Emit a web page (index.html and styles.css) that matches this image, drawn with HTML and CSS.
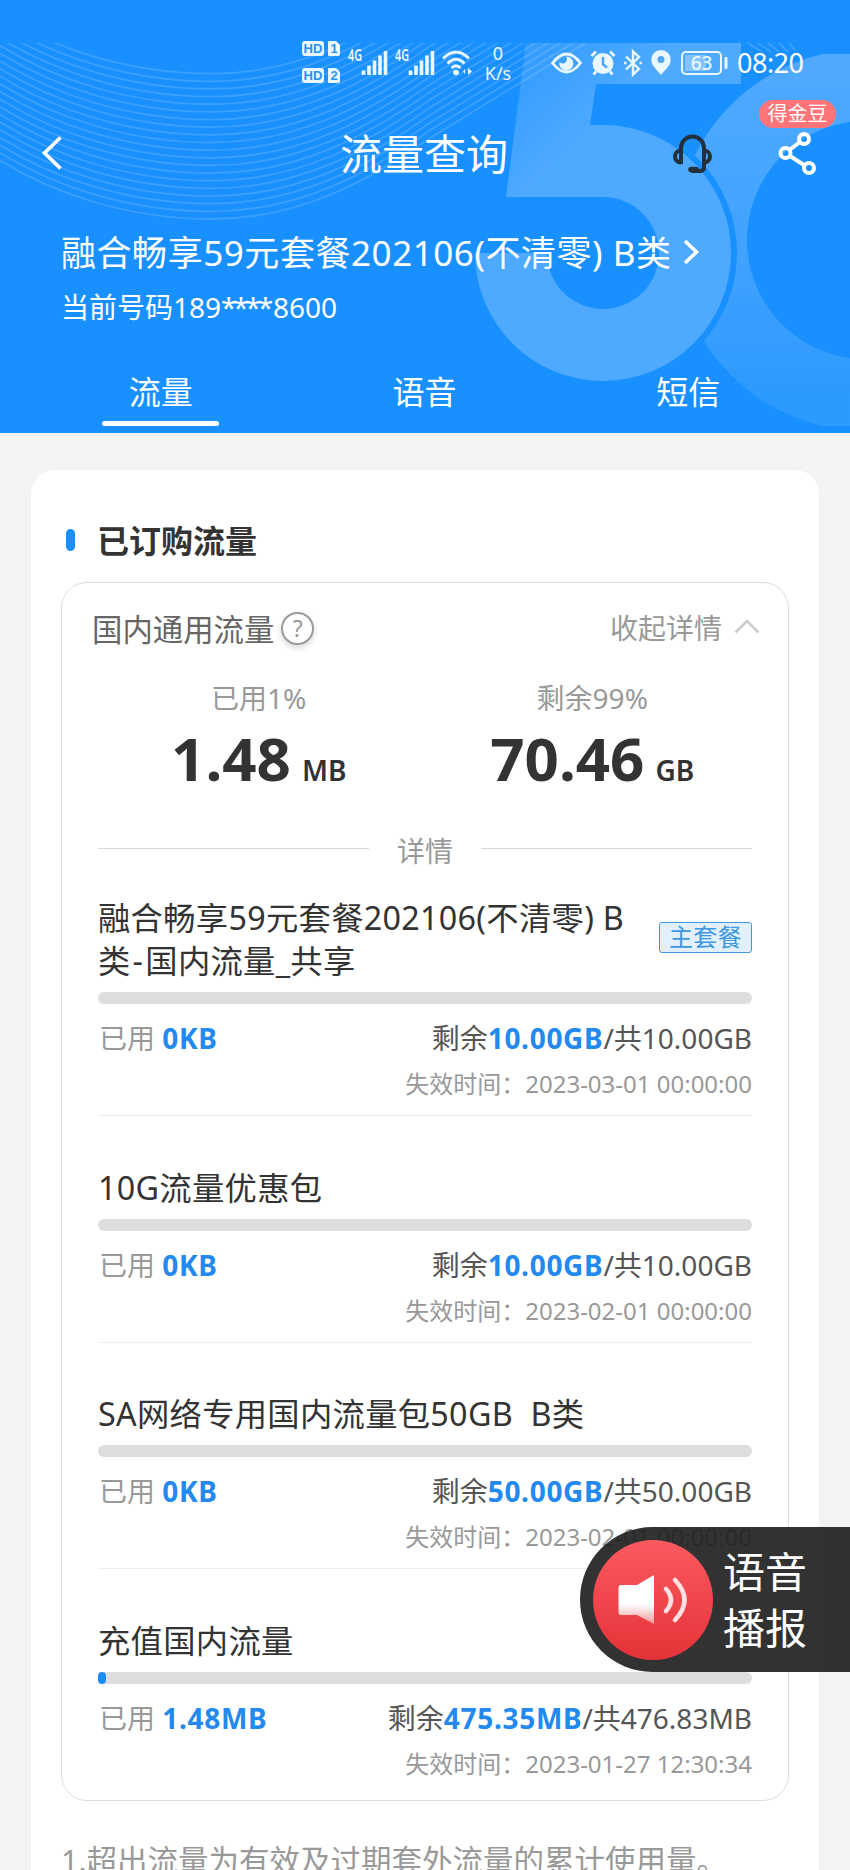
FILE: index.html
```
<!DOCTYPE html>
<html lang="zh-CN">

<head>
    <meta charset="utf-8">
    <title>流量查询</title>
    <link rel="stylesheet" href="styles.css">
</head>

<body>

<div class="header">
    <!-- 头部背景 -->
    <svg class="header-bg" width="850" height="433" viewBox="0 0 850 433">
        <defs>
            <linearGradient id="g5" gradientUnits="userSpaceOnUse" x1="515" y1="50" x2="590" y2="130">
                <stop offset="0" stop-color="#fff" stop-opacity=".1"/>
                <stop offset="1" stop-color="#fff" stop-opacity=".23"/>
            </linearGradient>
            <linearGradient id="g0" x1="0" y1="0" x2="0" y2="1">
                <stop offset="0" stop-color="#fff" stop-opacity=".23"/>
                <stop offset=".55" stop-color="#fff" stop-opacity=".17"/>
                <stop offset="1" stop-color="#fff" stop-opacity=".09"/>
            </linearGradient>
            <clipPath id="top"><rect x="0" y="43" width="850" height="390"/></clipPath>
            <mask id="gap">
                <rect width="850" height="433" fill="#fff"/>
                <circle cx="603" cy="253" r="134" fill="#000"/>
                <rect x="500" y="43" width="241" height="41" fill="#000"/>
            </mask>
            <path id="wave" d="M-30 140C50 200 140 219 212 219C300 219 370 180 430 138L600 34"/>
        </defs>
        <g id="waves" class="waves" clip-path="url(#top)"></g>
        <path class="waves" d="M748 43l14 9M758 43l13 9M768 43l11 9M779 43l9 9M789 43l6 7"/>
        <path fill="url(#g5)" d="M526 43H741V84H596L590 125H603A128 128 0 1 1 475 253H547A56 56 0 1 0 603 197H506Z"/>
        <circle mask="url(#gap)" cx="866" cy="240" r="155" fill="none" stroke="url(#g0)" stroke-width="72"/>
    </svg>

    <div class="status">
        <svg class="hd" width="38" height="43" viewBox="0 0 38 43">
            <rect x="0" y="0" width="22" height="15" rx="3"/>
            <path d="M27 0h7l4 4v9a2 2 0 0 1-2 2h-9a1 1 0 0 1-1-1v-13a1 1 0 0 1 1-1z"/>
            <text x="11" y="12">HD</text><text x="32" y="12">1</text>
            <rect x="0" y="27" width="22" height="15" rx="3"/>
            <path d="M27 27h7l4 4v9a2 2 0 0 1-2 2h-9a1 1 0 0 1-1-1v-13a1 1 0 0 1 1-1z"/>
            <text x="11" y="39">HD</text><text x="32" y="39">2</text>
        </svg>
        <svg class="signal" width="40" height="26" viewBox="0 0 40 26">
            <text x="0" y="11" textLength="14" lengthAdjust="spacingAndGlyphs">4G</text>
            <path d="M15.500 20.500V25M21 15.500V25M26.500 10.500V25M32 5.500V25M37.500 1V25"/>
        </svg>
        <svg class="signal signal2" width="40" height="26" viewBox="0 0 40 26">
            <text x="0" y="11" textLength="14" lengthAdjust="spacingAndGlyphs">4G</text>
            <path d="M15.500 20.500V25M21 15.500V25M26.500 10.500V25M32 5.500V25M37.500 1V25"/>
        </svg>
        <svg class="wifi" width="30" height="26" viewBox="0 0 30 26">
            <path class="line" d="M1 8.500Q14 -4.500 27 8.500M5.500 13.500Q14 5 22.500 13.500M9.500 18Q14 13.500 18.500 18"/>
            <circle cx="14" cy="22.500" r="2.800"/>
            <path d="M26 18l4 3.500-4 3.500zM23 19l-2 2.500 2 2.500z"/>
        </svg>
        <div class="speed"><span>0</span><span>K/s</span></div>
        <svg class="eye" width="31" height="22" viewBox="0 0 31 22">
            <path class="line" d="M1.500 11Q15.500 -7 29.500 11Q15.500 29 1.500 11Z"/>
            <path d="M15 4.500a7 7 0 1 1-6.500 5.500a4 4 0 0 0 6.500-5.500z"/>
        </svg>
        <svg class="alarm" width="26" height="26" viewBox="0 0 26 26">
            <circle cx="13" cy="13.500" r="10.500"/>
            <path class="line" d="M1.500 6L6 1.500M24.500 6L20 1.500M6 21.500L3.500 24.500M20 21.500L22.500 24.500"/>
            <path class="hand" d="M13 7v7.500l4 3"/>
        </svg>
        <svg class="bt" width="20" height="26" viewBox="0 0 20 26">
            <path class="line" d="M3 6.500L16 19L10 24.500V1.500L16 7L3 19.500M1 13h2.500M16.500 13h2.500"/>
        </svg>
        <svg class="pin" width="20" height="25" viewBox="0 0 20 25">
            <path fill-rule="evenodd" d="M10 0a9.700 9.700 0 0 1 9.700 9.700C19.700 15.500 14 20 10 25C6 20 .3 15.500.3 9.700A9.700 9.700 0 0 1 10 0zM10 6a3.500 3.500 0 1 0 0 7a3.500 3.500 0 0 0 0-7z"/>
        </svg>
        <svg class="battery" width="47" height="24" viewBox="0 0 47 24">
            <rect class="shell" x="1" y="1" width="39" height="22" rx="4"/>
            <rect x="4" y="4" width="21" height="16" rx="1" opacity=".35"/>
            <rect x="43.500" y="6" width="3" height="12" rx="1"/>
            <text x="20.500" y="18.500">63</text>
        </svg>
        <span class="time">08:20</span>
    </div>

    <div class="nav">
        <svg class="back" width="20" height="36" viewBox="0 0 20 36"><path d="M18.500 1.500L2.500 17L18.500 32.500"/></svg>
        <h1>流量查询</h1>
        <svg class="headset" width="42" height="40" viewBox="0 0 42 40">
            <path d="M10 30V14a11.500 11.500 0 0 1 23 0V33q0 4-4 4H20M10 16.500a6 6 0 0 0 0 12M33 16.500a6 6 0 0 1 0 12"/>
            <path class="mic" d="M20 35.500h5"/>
        </svg>
        <div class="share">
            <svg width="40" height="44" viewBox="0 0 40 44">
                <path d="M11.500 18L22 10M12 24L26 33"/>
                <circle cx="26" cy="7" r="5"/><circle cx="7.500" cy="21" r="5"/><circle cx="31" cy="36" r="5"/>
            </svg>
            <span class="badge">得金豆</span>
        </div>
    </div>

    <div class="plan">
        <span>融合畅享59元套餐202106(不清零) B类</span>
        <svg width="16" height="26" viewBox="0 0 16 26"><path d="M2 1L13.500 12L2 23"/></svg>
    </div>
    <div class="phone">当前号码189<span>****</span>8600</div>

    <ul class="tabs">
        <li class="on">流量</li>
        <li>语音</li>
        <li>短信</li>
    </ul>
</div>

<div class="card">
    <h2>已订购流量</h2>

    <div class="panel">
        <div class="panel-head">
            <span class="name">国内通用流量</span>
            <span class="help">?</span>
            <span class="fold">收起详情</span>
            <svg width="26" height="15" viewBox="0 0 26 15"><path d="M1.500 13.500L13 2L24.500 13.500"/></svg>
        </div>

        <div class="total">
            <div>
                <p>已用1%</p>
                <p class="num">1.48<b>MB</b></p>
            </div>
            <div>
                <p>剩余99%</p>
                <p class="num">70.46<b>GB</b></p>
            </div>
        </div>

        <div class="divider"><span>详情</span></div>

        <ul class="list">
            <li>
                <div class="title"><span>融合畅享59元套餐202106(不清零) B<br>类<i>-</i>国内流量_共享</span><em>主套餐</em></div>
                <div class="bar"></div>
                <div class="use"><span class="used">已用 <b>0KB</b></span><span>剩余<b>10.00GB</b>/共10.00GB</span></div>
                <div class="expire">失效时间：<span>2023-03-01 00:00:00</span></div>
            </li>
            <li>
                <div class="title"><span>10G流量优惠包</span></div>
                <div class="bar"></div>
                <div class="use"><span class="used">已用 <b>0KB</b></span><span>剩余<b>10.00GB</b>/共10.00GB</span></div>
                <div class="expire">失效时间：<span>2023-02-01 00:00:00</span></div>
            </li>
            <li>
                <div class="title"><span>SA网络专用国内流量包50GB&nbsp; B类</span></div>
                <div class="bar"></div>
                <div class="use"><span class="used">已用 <b>0KB</b></span><span>剩余<b>50.00GB</b>/共50.00GB</span></div>
                <div class="expire">失效时间：<span>2023-02-01 00:00:00</span></div>
            </li>
            <li>
                <div class="title"><span>充值国内流量</span></div>
                <div class="bar"><i style="width: 1.2%"></i></div>
                <div class="use"><span class="used">已用 <b>1.48MB</b></span><span>剩余<b>475.35MB</b>/共476.83MB</span></div>
                <div class="expire">失效时间：<span>2023-01-27 12:30:34</span></div>
            </li>
        </ul>
    </div>

    <p class="note">1.超出流量为有效及过期套外流量的累计使用量。</p>
</div>

<!-- 语音播报悬浮按钮 -->
<div class="voice">
    <svg width="120" height="120" viewBox="0 0 120 120">
        <defs>
            <linearGradient id="red" x1="0" y1="0" x2="0" y2="1">
                <stop offset="0" stop-color="#fb5a60"/>
                <stop offset="1" stop-color="#e43238"/>
            </linearGradient>
            <linearGradient id="horn" x1="0" y1="0" x2="0" y2="1">
                <stop offset=".6" stop-color="#fff"/>
                <stop offset="1" stop-color="#fff" stop-opacity=".45"/>
            </linearGradient>
        </defs>
        <circle cx="60" cy="60" r="60" fill="url(#red)"/>
        <path fill="url(#horn)" d="M28 45H44L61 35V84L44 75H28Q25.500 75 25.500 72V48Q25.500 45 28 45Z"/>
        <path class="sound" d="M73 49q10 11 0 22M82 40q19 20 0 40"/>
    </svg>
    <span>语音<br>播报</span>
</div>

<script>
    //循环画出背景波浪线
    var html = "";
    for (var i = 0; i < 20; i++) {
        html += '<use href="#wave" y="' + (-7.65 * i) + '"/>';
    }
    document.getElementById("waves").innerHTML = html;
</script>
</body>

</html>
```

FILE: styles.css
```
html,
body,
ul,
li,
h1,
h2,
p {
    margin: 0;
    padding: 0;
    list-style: none;
}

body {
    width: 850px;
    height: 1870px;
    overflow: hidden;
    position: relative;
    background: #f3f3f3;
    color: #333;
    font-family: "Noto Sans", "Noto Sans CJK SC", sans-serif;
}

svg {
    display: block;
    flex: none;
    overflow: visible;
}

/* 头部 */
.header {
    position: relative;
    height: 433px;
    background: #1990ff;
    color: #fff;
}

.header-bg {
    position: absolute;
    left: 0;
    top: 0;
    overflow: hidden;
}

.waves {
    fill: none;
    stroke: #fff;
    stroke-opacity: .15;
    stroke-width: 1.8;
}

.status,
.nav,
.plan,
.phone,
.tabs {
    position: relative;
}

.status {
    display: flex;
    align-items: center;
    height: 43px;
    padding: 41px 0 0 302px;
    fill: #e9f7ff;
}

.status .line {
    fill: none;
    stroke: #e9f7ff;
    stroke-width: 2.8;
}

.hd text {
    font-size: 13px;
    font-weight: bold;
    font-family: "Liberation Sans", sans-serif;
    text-anchor: middle;
    fill: #2a93f5;
}

.signal {
    margin-left: 8px;
    stroke: #e9f7ff;
    stroke-width: 3.6;
}

.signal2 {
    margin-left: 7px;
}

.signal text {
    font-size: 16px;
    font-weight: 600;
    stroke: none;
}

.wifi {
    margin-left: 7px;
}

.speed {
    display: flex;
    flex-direction: column;
    align-items: center;
    width: 40px;
    margin-left: 6px;
    font-size: 18px;
    line-height: 20px;
    color: #e9f7ff;
}

.eye {
    margin-left: 33px;
}

.alarm {
    margin-left: 8px;
}

.alarm .hand {
    fill: none;
    stroke: #45a2ff;
    stroke-width: 2.4;
}

.bt {
    margin-left: 7px;
}

.status .bt .line {
    stroke-width: 2.4;
}

.pin {
    margin-left: 8px;
}

.battery {
    margin-left: 10px;
}

.battery .shell {
    fill: none;
    stroke: #e9f7ff;
    stroke-width: 2;
}

.battery text {
    font-size: 19px;
    font-weight: 500;
    text-anchor: middle;
}

.time {
    margin-left: 9px;
    font-size: 27px;
    letter-spacing: -.5px;
}

.nav {
    display: flex;
    align-items: center;
    height: 66px;
    margin-top: 37px;
    padding: 0 32px 0 42px;
}

.back,
.plan svg,
.headset,
.share svg {
    fill: none;
    stroke: #fff;
    stroke-width: 3.6;
}

.nav h1 {
    margin-left: 278px;
    font-size: 42px;
    font-weight: 400;
    line-height: 66px;
}

.nav .headset {
    margin-left: 163px;
    stroke: #22303c;
    stroke-width: 4;
}

.headset .mic {
    stroke-width: 5.500;
    stroke-linecap: round;
}

.share {
    position: relative;
    margin-left: auto;
}

.share svg {
    stroke-width: 4;
}

.badge {
    position: absolute;
    right: -18px;
    top: -32px;
    width: 77px;
    height: 28px;
    border-radius: 14px;
    background: #ff7479;
    font-size: 20px;
    line-height: 28px;
    text-align: center;
}

.plan {
    display: flex;
    align-items: center;
    gap: 11px;
    margin: 42px 0 0 61px;
    font-size: 35px;
    line-height: 48px;
    letter-spacing: .55px;
}

.phone {
    margin: 10px 0 0 61px;
    font-size: 28px;
    line-height: 40px;
}

.phone span {
    letter-spacing: -3.2px;
    margin-right: 3px;
}

.tabs {
    display: flex;
    margin: 40px 30px 0 29px;
}

.tabs li {
    flex: 1;
    font-size: 32px;
    line-height: 50px;
    text-align: center;
}

.tabs .on::after {
    content: "";
    display: block;
    width: 117px;
    height: 5px;
    margin: 4px auto 0;
    border-radius: 3px;
    background: #fff;
}

/* 内容卡片 */
.card {
    width: 728px;
    height: 1400px;
    margin: 37px 0 0 31px;
    padding: 46px 30px 0;
    border-radius: 24px;
    background: #fff;
}

.card h2 {
    display: flex;
    align-items: center;
    height: 50px;
    font-size: 32px;
    line-height: 50px;
    font-weight: 700;
}

.card h2::before {
    content: "";
    width: 9px;
    height: 22px;
    margin: 0 22px 3px 5px;
    border-radius: 5px;
    background: #1990ff;
}

.panel {
    box-sizing: border-box;
    height: 1219px;
    margin-top: 16px;
    padding: 24px 36px 0;
    border: 1px solid #ddd;
    border-radius: 26px;
}

.panel-head {
    display: flex;
    align-items: center;
    height: 42px;
    margin: 0 -8px 0 -6px;
    color: #666;
}

.panel-head .name {
    font-size: 30.4px;
}

.panel-head svg {
    margin: 0 0 3px 12px;
    fill: none;
    stroke: #ccc;
    stroke-width: 2.600;
}

.help {
    width: 29px;
    height: 29px;
    margin-left: 7px;
    border: 2px solid #999;
    border-radius: 50%;
    box-shadow: 0 3px 6px rgba(0, 0, 0, .15);
    font-size: 23px;
    line-height: 29px;
    text-align: center;
    color: #999;
}

.fold {
    margin-left: auto;
    margin-bottom: 2px;
    font-size: 28px;
    color: #999;
}

.total {
    display: flex;
    margin: 29px -7px 0 -6px;
    text-align: center;
}

.total div {
    flex: 1;
}

.total p {
    font-size: 28px;
    line-height: 40px;
    color: #999;
}

.total .num {
    margin-top: 4px;
    font-size: 60px;
    font-weight: 700;
    line-height: 72px;
    color: #333;
}

.num b {
    margin-left: 11px;
    font-size: 28px;
    font-weight: 600;
}

.divider {
    display: flex;
    align-items: center;
    gap: 28px;
    height: 40px;
    margin-top: 24px;
    font-size: 28px;
    color: #999;
}

.divider::before,
.divider::after {
    content: "";
    flex: 1;
    height: 1px;
    margin-bottom: 3px;
    background: #d8d8d8;
}

.list li {
    padding-top: 49.600px;
    padding-bottom: 16px;
    border-bottom: 1px solid #eee;
}

.list li:first-child {
    padding-top: 26px;
}

.list li:last-child {
    border-bottom: 0;
}

.title {
    display: flex;
    align-items: center;
    justify-content: space-between;
    font-size: 32.3px;
    line-height: 43px;
    letter-spacing: .3px;
}

.title span {
    white-space: nowrap;
}

.title i {
    padding: 0 2px;
    font-style: normal;
}

.title em {
    box-sizing: border-box;
    width: 93px;
    height: 31px;
    margin-top: -3px;
    border: 1.500px solid #3e97e0;
    border-radius: 3px;
    background: #e1f0fc;
    font-size: 24px;
    font-style: normal;
    line-height: 28px;
    text-align: center;
    color: #3e97e0;
}

.bar {
    height: 12px;
    margin-top: 10px;
    border-radius: 6px;
    background: #dedede;
}

.bar i {
    display: block;
    height: 12px;
    border-radius: 6px;
    background: #1e8cf0;
}

.use {
    display: flex;
    justify-content: space-between;
    margin-top: 13px;
    font-size: 28px;
    line-height: 42px;
    color: #555;
}

.use .used {
    padding-left: 1px;
    color: #999;
}

.use b {
    letter-spacing: .7px;
    color: #2389ee;
}

.expire {
    margin-top: 10px;
    font-size: 24px;
    line-height: 30px;
    text-align: right;
    color: #999;
}

.note {
    margin-top: 37px;
    font-size: 30.500px;
    line-height: 44px;
    white-space: nowrap;
    color: #999;
}

/* 悬浮按钮 */
.voice {
    position: absolute;
    right: 0;
    top: 1527px;
    display: flex;
    align-items: center;
    box-sizing: border-box;
    width: 270px;
    height: 145px;
    padding-left: 13px;
    border-radius: 73px 0 0 73px;
    background: rgba(30, 30, 30, .91);
    color: #fff;
}

.voice span {
    margin-left: 10px;
    font-size: 42px;
    line-height: 56px;
}

.voice .sound {
    fill: none;
    stroke: #ffe1e1;
    stroke-width: 4.500;
    stroke-linecap: round;
}
```
